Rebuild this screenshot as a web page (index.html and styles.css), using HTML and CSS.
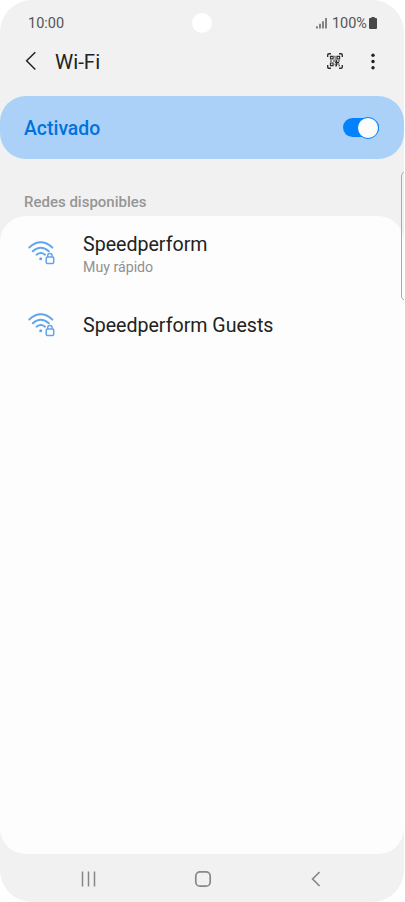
FILE: index.html
```html
<!DOCTYPE html>
<html lang="es">
<head>
<meta charset="utf-8">
<title>Wi-Fi</title>
<link rel="stylesheet" href="styles.css">
</head>
<body>
<div class="phone">
  <div class="status">
    <span class="clock">10:00</span>
    <span class="camera"></span>
    <svg class="signal" width="12" height="12" viewBox="0 0 12 12"><path d="M1 9.300v2.200M4 6.800v4.700M7 4.200v7.300M10 1v10.500" stroke="#555" stroke-width="1.400"/></svg>
    <span class="percent">100%</span>
    <svg class="battery" width="8" height="12" viewBox="0 0 8 12"><path d="M2.300 0h3.400v1.100H7q1 0 1 1V11q0 1-1 1H1q-1 0-1-1V2.100q0-1 1-1h1.300z" fill="#484848"/></svg>
  </div>
  <header class="bar">
    <svg class="back" width="12" height="20" viewBox="0 0 12 20"><path d="M10.300 1.200L1.600 9.800l8.700 8.700" fill="none" stroke="#222" stroke-width="1.500"/></svg>
    <h1 class="title">Wi-Fi</h1>
    <svg class="qr" width="16" height="16" viewBox="0 0 16 16" fill="none" stroke="#303030">
      <path d="M.7 4V2Q.7.700 2 .7h2M12 .7h2q1.300 0 1.300 1.300v2M15.300 12v2q0 1.300-1.300 1.300h-2M4 15.300H2Q.7 15.300.7 14v-2" stroke-width="1.400"/>
      <path d="M3.500 3.300h2.600v2.600H3.500zM10 3.300h2.600v2.600H10zM3.500 10h2.600v2.600H3.500z" stroke-width="1.200"/>
      <path d="M8 2.800v2M7.500 6h1.800M3 8h2M6 8h3M10.500 8H13M8 9.500h4M7.500 11.200h1.500M10 11h2.500M8 13h2M11.500 12.700H13M9.500 7v6" stroke-width="1"/>
    </svg>
    <svg class="more" width="4" height="17" viewBox="0 0 4 17" fill="#222"><circle cx="2" cy="2.300" r="1.700"/><circle cx="2" cy="8.500" r="1.700"/><circle cx="2" cy="14.700" r="1.700"/></svg>
  </header>
  <section class="enabled">
    <span class="enabled-label">Activado</span>
    <span class="switch"><span class="knob"></span></span>
  </section>
  <h2 class="heading">Redes disponibles</h2>
  <main class="networks">
    <div class="network network-fast">
      <svg class="wifi" width="28" height="24" viewBox="0 0 28 24" fill="none" stroke="#62a5ea" stroke-width="1.900" stroke-linecap="round"><path d="M1.300 6.500Q12.800-3.800 24.300 6.500M4.800 10.300q8-7 16 0M8.600 13.700q4.200-3.400 8.400 0"/><circle cx="12.700" cy="17.700" r="1.500" fill="#62a5ea" stroke="none"/><rect x="18.200" y="16.100" width="7.500" height="6.300" rx="1.200" stroke-width="1.500"/><path d="M19.700 16v-1.500q0-2 2.200-2t2.200 2V16" stroke-width="1.500"/></svg>
      <div class="info"><div class="name">Speedperform</div><div class="speed">Muy rápido</div></div>
    </div>
    <div class="network network-guests">
      <svg class="wifi" width="28" height="24" viewBox="0 0 28 24" fill="none" stroke="#62a5ea" stroke-width="1.900" stroke-linecap="round"><path d="M1.300 6.500Q12.800-3.800 24.300 6.500M4.800 10.300q8-7 16 0M8.600 13.700q4.200-3.400 8.400 0"/><circle cx="12.700" cy="17.700" r="1.500" fill="#62a5ea" stroke="none"/><rect x="18.200" y="16.100" width="7.500" height="6.300" rx="1.200" stroke-width="1.500"/><path d="M19.700 16v-1.500q0-2 2.200-2t2.200 2V16" stroke-width="1.500"/></svg>
      <div class="info"><div class="name">Speedperform Guests</div></div>
    </div>
  </main>
  <nav class="nav">
    <svg width="16" height="16" viewBox="0 0 16 16"><path d="M1.500.500v15M7.500.500v15M13.500.500v15" stroke="#878787" stroke-width="1.500"/></svg>
    <svg width="18" height="18" viewBox="0 0 18 18"><rect x="1.800" y="1.800" width="14.400" height="14.400" rx="4.200" fill="none" stroke="#878787" stroke-width="1.700"/></svg>
    <svg width="10" height="16" viewBox="0 0 10 16"><path d="M8.600 1L1.600 8l7 7" fill="none" stroke="#878787" stroke-width="1.700"/></svg>
  </nav>
  <div class="edge-handle"></div>
</div>
</body>
</html>
```
FILE: styles.css
```css
* { box-sizing: border-box; }
body { margin: 0; background: #fff; font-family: Roboto, sans-serif; }
svg { display: block; flex: none; }
.phone {
  position: relative;
  display: flex;
  flex-direction: column;
  width: 404.4px;
  height: 902px;
  overflow: hidden;
  border-radius: 32px;
  background: #f1f1f1;
}
.status {
  display: flex;
  align-items: center;
  height: 46px;
  padding: 0 27.4px 0 28px;
  font-size: 14.5px;
  color: #555;
}
.clock { width: 164px; padding-top: 1px; }
.camera { width: 20px; height: 20px; border-radius: 50%; background: #fff; }
.signal { margin-left: auto; }
.percent { margin: 0 2px 0 4px; padding-top: 1px; }
.bar {
  display: flex;
  align-items: center;
  height: 30px;
  padding: 0 29.4px 0 25px;
  color: #222;
}
.title { margin: 0 auto 0 18px; padding-top: 1px; font-size: 20.5px; font-weight: 400; }
.more { margin-left: 28px; }
.enabled {
  display: flex;
  align-items: center;
  justify-content: space-between;
  height: 63px;
  margin-top: 20.3px;
  padding: 0 25.4px 0 24px;
  border-radius: 26px;
  background: #abd1f8;
}
.enabled-label { padding-top: 2px; font-size: 19.4px; font-weight: 500; color: #0072de; }
.switch {
  display: flex;
  align-items: center;
  justify-content: flex-end;
  width: 36px;
  height: 19px;
  border-radius: 10px;
  background: #0381fe;
}
.knob {
  flex: none;
  width: 22px;
  height: 22px;
  border: 1px solid #0381fe;
  border-radius: 50%;
  background: #fcfcfc;
}
.heading {
  height: 56.7px;
  margin: 0;
  padding: 32px 24px 0;
  font-size: 15px;
  line-height: 22px;
  font-weight: 500;
  color: #969696;
}
.networks {
  height: 638px;
  padding-top: 1px;
  border-radius: 26px;
  background: #fdfdfd;
}
.network {
  display: flex;
  align-items: center;
  height: 73px;
  padding-left: 28px;
}
.network-guests { height: 71px; }
.info { margin-left: 27px; }
.name { font-size: 19.6px; line-height: 24px; color: #222; }
.network-fast .info { padding-top: 4px; }
.network-guests .info { padding-top: 2px; }
.speed { font-size: 14.2px; line-height: 20px; color: #909090; }
.nav {
  display: flex;
  align-items: center;
  justify-content: space-between;
  height: 48px;
  padding: 2px 83.4px 0 81px;
}
.nav svg:nth-child(2) { margin-right: 2.5px; }
.edge-handle {
  position: absolute;
  top: 171px;
  left: 401px;
  width: 12px;
  height: 130px;
  border: 1px solid #aaa;
  border-radius: 5px;
}
```
